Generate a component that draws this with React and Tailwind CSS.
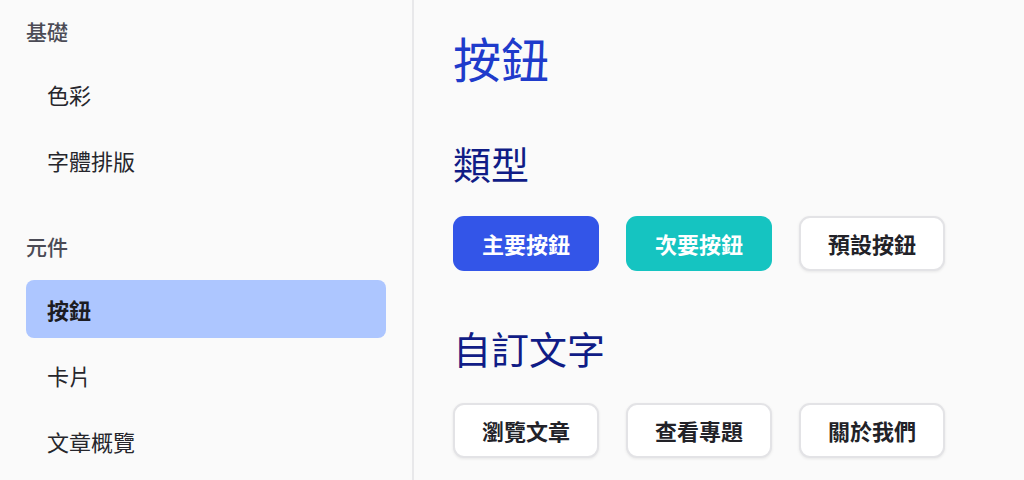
import React from "react";

const groups = [
  { title: "基礎", items: ["色彩", "字體排版"] },
  { title: "元件", items: ["按鈕", "卡片", "文章概覽"] },
];

const active = "按鈕";

const Sidebar = () => {
  return (
    <aside className="w-[414px] shrink-0 border-r-2 border-[#e8e8ea] px-[26px] pt-4">
      {groups.map((group, gi) => (
        <div key={group.title} className={gi > 0 ? "mt-[42px]" : ""}>
          <h3 className="text-[21px] leading-[30px] font-medium text-[#4b4b55]">
            {group.title}
          </h3>
          <ul className="mt-[19px] flex flex-col gap-2">
            {group.items.map((item) => (
              <li
                key={item}
                className={`h-[58px] flex items-center px-[21px] rounded-lg text-[22px] ${
                  item === active
                    ? "bg-[#adc6ff] font-bold text-[#1c1c22]"
                    : "text-[#26262c]"
                }`}
              >
                {item}
              </li>
            ))}
          </ul>
        </div>
      ))}
    </aside>
  );
};

const Button = ({ variant = "default", children }) => {
  const styles = {
    primary: "bg-[#3355e8] text-white border-transparent",
    secondary: "bg-[#15c4c1] text-white border-transparent",
    default: "bg-white text-[#222228] border-[#e3e3e6] shadow-[0_1px_3px_rgba(0,0,0,0.08)]",
  };
  return (
    <button
      className={`w-[146px] h-[55px] rounded-[11px] border-2 text-[22px] font-semibold flex items-center justify-center ${styles[variant]}`}
    >
      {children}
    </button>
  );
};

export default function App() {
  return (
    <div
      className="w-[1024px] h-[480px] overflow-hidden flex bg-[#fafafa]"
      style={{ fontFamily: '"Noto Sans CJK TC", "Noto Sans", sans-serif' }}
    >
      <Sidebar />
      <main className="flex-1 pl-[39px] pt-[28px]">
        <h1 className="text-[48px] leading-[58px] font-normal text-[#1f3bcb]">按鈕</h1>

        <h2 className="mt-[54px] text-[38px] leading-[46px] font-normal text-[#101c86]">類型</h2>
        <div className="mt-[30px] flex gap-[27px]">
          <Button variant="primary">主要按鈕</Button>
          <Button variant="secondary">次要按鈕</Button>
          <Button>預設按鈕</Button>
        </div>

        <h2 className="mt-[54px] text-[38px] leading-[46px] font-normal text-[#101c86]">自訂文字</h2>
        <div className="mt-[32px] flex gap-[27px]">
          <Button>瀏覽文章</Button>
          <Button>查看專題</Button>
          <Button>關於我們</Button>
        </div>
      </main>
    </div>
  );
}
